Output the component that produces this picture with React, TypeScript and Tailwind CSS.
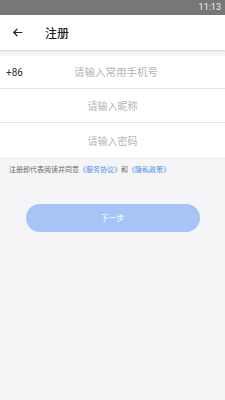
import React from 'react';

export default function App() {
    return (
        <div className="w-[225px] h-[400px] bg-[#f5f5f7] flex flex-col" style={{ fontFamily: '"Noto Sans CJK SC", Roboto, sans-serif' }}>
            {/* status bar */}
            <div className="h-[15px] bg-[#777777] flex items-center justify-end pr-[4px]">
                <span className="text-[9px] text-white/90 leading-none" style={{ fontFamily: 'Roboto, sans-serif' }}>11:13</span>
            </div>

            {/* header */}
            <div className="h-[35px] bg-white flex items-center shadow-[0_1px_2px_rgba(0,0,0,0.15)] relative z-10">
                <svg className="ml-[11px] w-[13px] h-[13px]" viewBox="0 0 24 24" fill="none" stroke="#222" strokeWidth="2.2" strokeLinecap="round" strokeLinejoin="round">
                    <path d="M20 12H5" />
                    <path d="M11 6l-6 6 6 6" />
                </svg>
                <span className="ml-[21px] text-[12px] font-medium text-[#222] leading-none">注册</span>
            </div>

            {/* form */}
            <div className="mt-[6px] bg-white flex flex-col">
                <div className="h-[33px] flex items-center border-b border-[#e6e6e6]">
                    <span className="w-[74px] pl-[6px] text-[10px] text-[#333]" style={{ fontFamily: 'Roboto, sans-serif' }}>+86</span>
                    <span className="text-[10.5px] text-[#b5b5b5]">请输入常用手机号</span>
                </div>
                <div className="h-[34px] flex items-center justify-center border-b border-[#e6e6e6]">
                    <span className="text-[10px] text-[#b5b5b5]">请输入昵称</span>
                </div>
                <div className="h-[34px] flex items-center justify-center">
                    <span className="text-[10px] text-[#b5b5b5]">请输入密码</span>
                </div>
            </div>

            <p className="mt-[9px] pl-[9px] text-[7px] text-[#666] leading-none">
                注册即代表阅读并同意<span className="text-[#4a8ee8]">《服务协议》</span>和<span className="text-[#4a8ee8]">《隐私政策》</span>
            </p>

            <div className="mt-[31px] flex justify-center">
                <button className="w-[174px] h-[28px] rounded-full bg-[#a6c4f6] text-white text-[8px]">下一步</button>
            </div>
        </div>
    );
}
